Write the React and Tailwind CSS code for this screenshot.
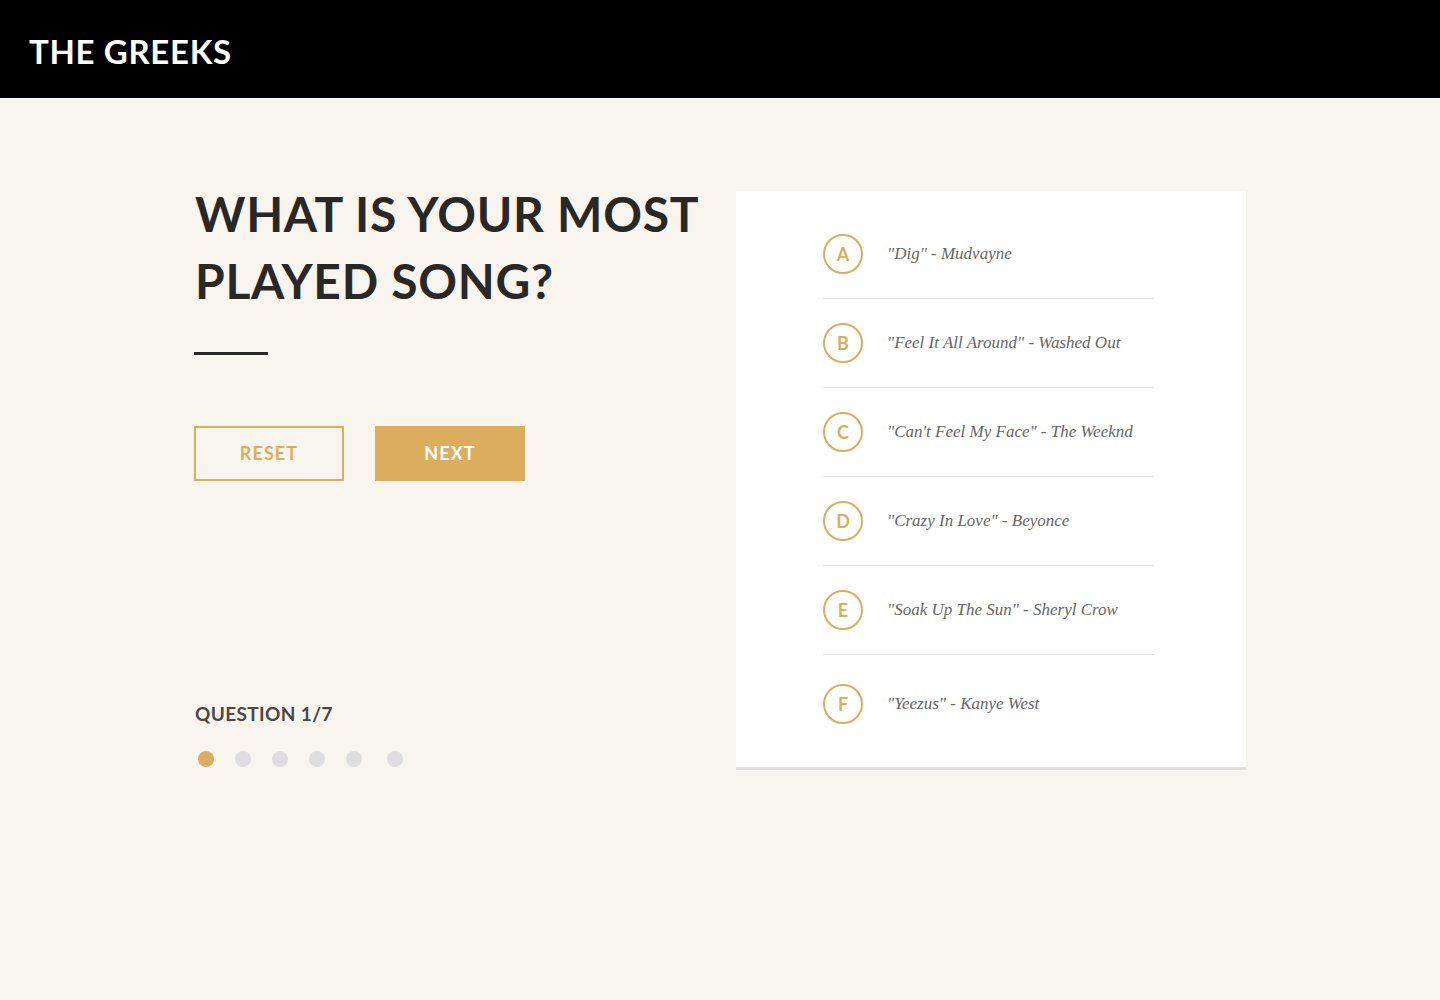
import React, { useState } from "react";

const options = [
  { key: "A", text: "\"Dig\" - Mudvayne" },
  { key: "B", text: "\"Feel It All Around\" - Washed Out" },
  { key: "C", text: "\"Can't Feel My Face\" - The Weeknd" },
  { key: "D", text: "\"Crazy In Love\" - Beyonce" },
  { key: "E", text: "\"Soak Up The Sun\" - Sheryl Crow" },
  { key: "F", text: "\"Yeezus\" - Kanye West" },
];

export default function App() {
  const [selected, setSelected] = useState(null);
  const step = 0;

  return (
    <div className="min-h-screen bg-[#f8f5ef] font-['Lato',sans-serif]">
      {/* HEADER */}
      <header className="h-[98px] bg-black flex items-center px-[29px] pt-[4px]">
        <h1 className="text-white text-[33px] font-bold tracking-[0.02em] leading-none">
          THE GREEKS
        </h1>
      </header>

      {/* QUIZ */}
      <main className="max-w-[1052px] mx-auto flex items-start pt-[93px]">
        <div className="w-[542px] shrink-0">
          <h2 className="-mt-[11px] pl-[1px] text-[#2a2824] text-[48px] font-bold leading-[67px] tracking-[0.015em] whitespace-nowrap">
            WHAT IS YOUR MOST
            <br />
            PLAYED SONG?
          </h2>

          <div className="w-[74px] h-[3px] bg-[#2a2824] mt-[38px]"></div>

          <div className="flex gap-[31px] mt-[71px]">
            <button className="w-[150px] h-[55px] border-2 border-[#dbae5e] text-[#dbae5e] text-[18px] font-bold tracking-[0.06em]">
              RESET
            </button>
            <button className="w-[150px] h-[55px] bg-[#dbae5e] text-white text-[18px] font-bold tracking-[0.06em]">
              NEXT
            </button>
          </div>

          <p className="mt-[223px] pl-[1px] text-[#4a4845] text-[19px] leading-[19px] font-bold tracking-[0.02em]">
            QUESTION 1/7
          </p>

          <div className="flex gap-[21px] mt-[28px] pl-[4px]">
            {[0, 1, 2, 3, 4, 5].map((i) => (
              <span
                key={i}
                className={
                  i === step
                    ? "w-4 h-4 rounded-full bg-[#dbae5e]"
                    : i === 5
                    ? "w-4 h-4 ml-1 rounded-full bg-[#dedede]"
                    : "w-4 h-4 rounded-full bg-[#dedede]"
                }
              ></span>
            ))}
          </div>
        </div>

        <div className="w-[510px] bg-white border-b-[3px] border-[#e0dfdc] pl-[87px] pr-[92px] pt-[19px] pb-[43px]">
          {options.map((opt, i) => (
            <div
              key={opt.key}
              onClick={() => setSelected(opt.key)}
              className={
                i === options.length - 1
                  ? "flex items-center pt-[29px] cursor-pointer"
                  : "flex items-center py-6 border-b border-[#e2e2e2] cursor-pointer"
              }
            >
              <span
                className={
                  selected === opt.key
                    ? "w-10 h-10 shrink-0 rounded-full border-2 border-[#dbae5e] bg-[#dbae5e] text-white flex items-center justify-center text-[18px] font-bold"
                    : "w-10 h-10 shrink-0 rounded-full border-2 border-[#dbae5e] text-[#dbae5e] flex items-center justify-center text-[18px] font-bold"
                }
              >
                {opt.key}
              </span>
              <span className="ml-[24px] text-[#666666] text-[17px] italic whitespace-nowrap font-['Liberation_Serif',serif]">
                {opt.text}
              </span>
            </div>
          ))}
        </div>
      </main>
    </div>
  );
}
